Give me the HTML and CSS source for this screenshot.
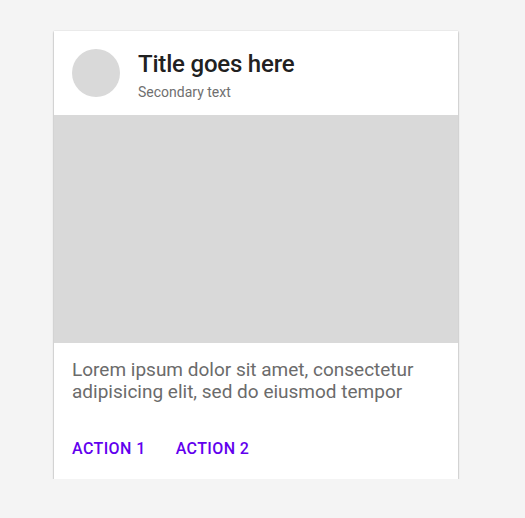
FILE: index.html
```html
<!DOCTYPE html>
<html lang="en">

<head>
    <meta charset="UTF-8">
    <meta name="viewport" content="width=device-width, initial-scale=1.0">
    <title>Card</title>
    <link rel="stylesheet" href="styles.css">
</head>

<body>
    <div class="page">
        <div class="card">
            <div class="card-header">
                <div class="avatar"></div>
                <div class="titles">
                    <h1>Title goes here</h1>
                    <h2>Secondary text</h2>
                </div>
            </div>
            <div class="media"></div>
            <div class="card-body">
                <p>Lorem ipsum dolor sit amet, consectetur adipisicing elit, sed do eiusmod tempor</p>
            </div>
            <div class="actions">
                <button>Action 1</button>
                <button>Action 2</button>
            </div>
        </div>
    </div>
</body>

</html>
```

FILE: styles.css
```css
/*General*/
html {
    font-family: 'Roboto', sans-serif;
}

* {
    margin: 0;
    padding: 0;
    box-sizing: border-box;
}

body {
    background-color: #f4f4f4;
}

.page {
    padding: 31px 0 0 54px;
}

/*Card*/
.card {
    width: 404px;
    background-color: #fff;
    box-shadow: 0 1px 2px rgba(0, 0, 0, 0.3), 0 1px 1px rgba(0, 0, 0, 0.14), 0 0 1px rgba(0, 0, 0, 0.12);
}

/*header*/
.card-header {
    display: flex;
    flex-direction: row;
    align-items: center;
    height: 84px;
    padding: 0 18px;
}

.avatar {
    width: 48px;
    height: 48px;
    border-radius: 50%;
    background-color: #d9d9d9;
    flex-shrink: 0;
}

.titles {
    padding-left: 18px;
    padding-top: 5px;
}

.titles h1 {
    font-size: 24px;
    font-weight: 500;
    letter-spacing: -0.2px;
    color: #212121;
    line-height: 30px;
}

.titles h2 {
    font-size: 14px;
    font-weight: 400;
    color: #6f6f6f;
    line-height: 20px;
    margin-top: 3px;
}

/*media*/
.media {
    height: 228px;
    background-color: #d9d9d9;
}

/*body*/
.card-body {
    padding: 16px 18px 0 18px;
}

.card-body p {
    font-size: 19px;
    line-height: 22px;
    color: #6b6b6b;
}

/*actions*/
.actions {
    display: flex;
    flex-direction: row;
    padding: 36px 18px 20px 18px;
}

.actions button {
    font-family: inherit;
    font-size: 16px;
    font-weight: 500;
    letter-spacing: 0.4px;
    text-transform: uppercase;
    color: #6200ee;
    background: none;
    border: none;
    margin-right: 30px;
    line-height: 20px;
    cursor: pointer;
}
```
